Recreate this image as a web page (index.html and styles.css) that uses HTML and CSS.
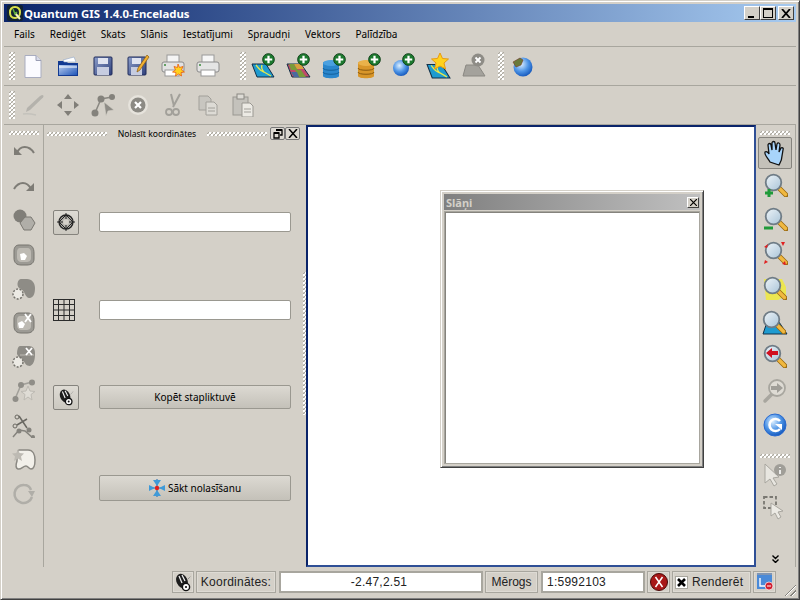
FILE: index.html
```html
<!DOCTYPE html>
<html>
<head lang="lv">
    <meta charset="UTF-8">
    <title>Quantum GIS 1.4.0-Enceladus</title>
    <link rel="stylesheet" href="styles.css">
</head>
<body>
<svg class="sprite" width="0" height="0">
    <defs>
        <linearGradient id="blueFill" x1="0" y1="0" x2="1" y2="1"><stop offset="0" stop-color="#bcd0f0"/><stop offset="1" stop-color="#1f55b8"/></linearGradient>
        <linearGradient id="floppy" x1="0" y1="0" x2="1" y2="1"><stop offset="0" stop-color="#8d9fcb"/><stop offset="1" stop-color="#2e3f7a"/></linearGradient>
        <radialGradient id="globe" cx=".4" cy=".35" r=".7"><stop offset="0" stop-color="#dcefff"/><stop offset=".55" stop-color="#4d94e6"/><stop offset="1" stop-color="#0f52b8"/></radialGradient>
        <linearGradient id="lens" x1="0" y1="0" x2="1" y2="1"><stop offset="0" stop-color="#eef4f8"/><stop offset="1" stop-color="#a9c4d8"/></linearGradient>

        <symbol id="plus" viewBox="0 0 14 14">
            <circle cx="7" cy="7" r="6.3" fill="#1c7a2e" stroke="#0c3d16"/>
            <path d="M7 3v8M3 7h8" stroke="#fff" stroke-width="2.4"/>
        </symbol>
        <symbol id="mapbase" viewBox="0 0 24 24">
            <path d="M1 10h14l8 13H6z" fill="#1e9bd0" stroke="#123048"/>
            <path d="M5 11c3 4 4 6 8 7l7 4M11 11c-1 3 0 5 2 7" fill="none" stroke="#e8e84a" stroke-width="1.3"/>
        </symbol>
        <symbol id="mouse" viewBox="0 0 20 20">
            <ellipse cx="9" cy="9" rx="5.5" ry="7.5" transform="rotate(-25 9 9)" fill="#1c1c1c"/>
            <path d="M6 4l3 7M9 3l3 6" stroke="#eee" stroke-width="1.3"/>
            <circle cx="13" cy="15" r="3.6" fill="#fff" stroke="#111" stroke-width="1.4"/>
            <circle cx="13" cy="15" r="1.1" fill="#111"/>
            <path d="M15 7l3-3" stroke="#777" stroke-dasharray="1 1"/>
        </symbol>
        <symbol id="magnifier" viewBox="0 0 24 24">
            <path d="M15 15l7 7" stroke="#9a6a10" stroke-width="5" stroke-linecap="round"/>
            <path d="M15.500 15.500l6 6" stroke="#f0b840" stroke-width="3.400" stroke-linecap="round"/>
            <circle cx="9.500" cy="9.500" r="7.800" fill="url(#lens)" stroke="#6f7c86" stroke-width="1.800"/>
        </symbol>
        <symbol id="blob" viewBox="0 0 24 24">
            <path d="M7 2h9c4 0 6 3 6 8v6c0 4-3 6-7 6H9c-4 0-7-2-7-7V8c0-4 2-6 5-6z" fill="#9c9a94" stroke="#77756f"/>
            <path d="M8 5h7c3 0 4 2 4 5v5c0 3-2 4-5 4H9c-2 0-4-2-4-4V9c0-2 1-4 3-4z" fill="#bdbab3"/>
        </symbol>
    </defs>
</svg>

<div class="window">
    <div class="titlebar">
        <svg class="app-icon" width="16" height="16" viewBox="0 0 16 16">
            <rect width="16" height="16" fill="#123" rx="2"/>
            <path d="M8 2c3.500 0 5 2.500 5 5.500S11 13 8 13 3 11 3 7.500 4.500 2 8 2z" fill="none" stroke="#d8e04a" stroke-width="2"/>
            <path d="M8 8l5 6" stroke="#f2f2c0" stroke-width="2"/>
            <path d="M6 4l2 5 2-2" fill="none" stroke="#5fae3a" stroke-width="1.500"/>
        </svg>
        <span class="title-text">Quantum GIS 1.4.0-Enceladus</span>
        <div class="caption-btns">
            <div class="caption-btn"><i class="cap-min"></i></div>
            <div class="caption-btn"><i class="cap-max"></i></div>
            <div class="caption-btn cap-close">
                <svg width="10" height="9" viewBox="0 0 10 9"><path d="M1 0l8 9M9 0l-8 9" stroke="#000" stroke-width="1.800"/></svg>
            </div>
        </div>
    </div>

    <ul class="menubar">
        <li>Fails</li>
        <li>Rediģēt</li>
        <li>Skats</li>
        <li>Slānis</li>
        <li>Iestatījumi</li>
        <li>Spraudņi</li>
        <li>Vektors</li>
        <li>Palīdzība</li>
    </ul>

    <div class="toolbar">
        <span class="grip-v"></span>
        <div class="tool"><svg width="24" height="24" viewBox="0 0 24 24"><path d="M4 1.500h11l5 5v17H4z" fill="#fbfbff" stroke="#a9adc0"/><path d="M15 1.500v5h5" fill="#d8dbe8" stroke="#9a9eb4"/></svg></div>
        <div class="tool"><svg width="24" height="24" viewBox="0 0 24 24"><path d="M2 7h8l2 2h10v13H2z" fill="#123a92"/><path d="M7 6l11-3 2 5H8z" fill="#fff" stroke="#8fa4c8" stroke-width=".6"/><path d="M3 11h18v10H3z" fill="url(#blueFill)"/><path d="M3 13h18" stroke="#fff"/></svg></div>
        <div class="tool"><svg width="24" height="24" viewBox="0 0 24 24"><rect x="3" y="3" width="18" height="18" rx="1" fill="url(#floppy)" stroke="#1f2a5a"/><rect x="7" y="4" width="10" height="6" fill="#dfe3f0"/><rect x="6" y="13" width="12" height="8" fill="#c6cce0"/></svg></div>
        <div class="tool"><svg width="24" height="24" viewBox="0 0 24 24"><rect x="2" y="3" width="18" height="18" rx="1" fill="url(#floppy)" stroke="#1f2a5a"/><rect x="6" y="4" width="9" height="6" fill="#dfe3f0"/><rect x="5" y="13" width="11" height="8" fill="#c6cce0"/><path d="M21 1l2 2-9 13-3 2 1-4z" fill="#f0b030" stroke="#8a5a10" stroke-width=".7"/></svg></div>
        <div class="tool"><svg width="24" height="24" viewBox="0 0 24 24"><rect x="6" y="1" width="12" height="8" fill="#f4f4f4" stroke="#999"/><rect x="1" y="8" width="22" height="10" rx="2" fill="#e2e2e2" stroke="#8a8a8a"/><rect x="4" y="16" width="14" height="6" fill="#fff" stroke="#999"/><circle cx="4" cy="11" r="1" fill="#3a8a3a"/><path d="M17 10l1.500 3.500 3.500-1-1.500 3.500 3 2-3.500.5.500 3.500-3-2-3 2 .5-3.500-3.500-.5 3-2-1.500-3.500 3.500 1z" fill="#ffd21e" stroke="#e85a10" stroke-width=".8"/></svg></div>
        <div class="tool"><svg width="24" height="24" viewBox="0 0 24 24"><rect x="6" y="1" width="12" height="8" fill="#f6f6f6" stroke="#999"/><rect x="1" y="8" width="22" height="10" rx="2" fill="#e4e4e4" stroke="#8a8a8a"/><rect x="5" y="16" width="14" height="6" fill="#fff" stroke="#999"/><circle cx="4" cy="11" r="1" fill="#3a8a3a"/></svg></div>
        <span class="grip-v grip-gap"></span>
        <div class="tool"><svg width="26" height="26" viewBox="0 0 26 26"><use href="#mapbase" x="0" y="1" width="24" height="24"/><use href="#plus" x="11" y="0" width="13" height="13"/></svg></div>
        <div class="tool"><svg width="26" height="26" viewBox="0 0 26 26"><path d="M1 11h14l9 13H6z" fill="#c04a6a" stroke="#123048"/><path d="M3 11h5l4 6H5zM9 17h6l5 7h-7z" fill="#7a9a3a"/><path d="M8 11h7l3 5h-7z" fill="#d8a040"/><path d="M5 19h6l2 5H8z" fill="#4a6aa0"/><use href="#plus" x="11" y="0" width="13" height="13"/></svg></div>
        <div class="tool"><svg width="26" height="26" viewBox="0 0 26 26"><path d="M2 10c0-3 16-3 16 0v13c0 3-16 3-16 0z" fill="#2a86cc"/><ellipse cx="10" cy="10" rx="8" ry="3" fill="#4aa0e0"/><path d="M2 15c0 3 16 3 16 0M2 19c0 3 16 3 16 0" fill="none" stroke="#12609c"/><use href="#plus" x="12" y="0" width="13" height="13"/></svg></div>
        <div class="tool"><svg width="26" height="26" viewBox="0 0 26 26"><path d="M2 10c0-3 16-3 16 0v13c0 3-16 3-16 0z" fill="#d8962a"/><ellipse cx="10" cy="10" rx="8" ry="3" fill="#eab24a"/><path d="M2 15c0 3 16 3 16 0M2 19c0 3 16 3 16 0" fill="none" stroke="#8a5a10"/><use href="#plus" x="12" y="0" width="13" height="13"/></svg></div>
        <div class="tool"><svg width="26" height="26" viewBox="0 0 26 26"><circle cx="10" cy="15" r="8" fill="url(#globe)"/><use href="#plus" x="11" y="0" width="13" height="13"/></svg></div>
        <div class="tool"><svg width="26" height="26" viewBox="0 0 26 26"><use href="#mapbase" x="0" y="1" width="25" height="25"/><path d="M14 0l2.500 5.500 6 .5-4.500 4 1.500 6-5.500-3-5.500 3 1.500-6L5.500 6l6-.5z" fill="#ffd21e" stroke="#e89a10"/></svg></div>
        <div class="tool"><svg width="26" height="26" viewBox="0 0 26 26"><path d="M5 12h12l7 11H2z" fill="#a4a29c" stroke="#8a8882"/><circle cx="17" cy="7" r="6.500" fill="#8e8c86"/><path d="M14.500 4.500l5 5M19.500 4.500l-5 5" stroke="#fff" stroke-width="1.800"/></svg></div>
        <span class="grip-v grip-gap-2"></span>
        <div class="tool"><svg width="24" height="24" viewBox="0 0 24 24"><circle cx="13" cy="13" r="9.500" fill="url(#globe)"/><path d="M3 8l7-4 3 2-2 5-5 2z" fill="#6a7a3a" stroke="#7a3a20" stroke-width=".6"/></svg></div>
    </div>

    <div class="toolbar">
        <span class="grip-v"></span>
        <div class="tool"><svg width="24" height="24" viewBox="0 0 24 24"><path d="M21 2c1.500 0 2 1 1 2.500L9 17l-4 2 1-4L19 3z" fill="#b4b2ac"/><path d="M2 21c5-1 9 0 13 1" fill="none" stroke="#c4c2bc" stroke-width="1.500"/></svg></div>
        <div class="tool"><svg width="24" height="24" viewBox="0 0 24 24"><path d="M12 1l4 5H8zM12 23l-4-5h8zM1 12l5-4v8zM23 12l-5 4V8z" fill="#807e78"/></svg></div>
        <div class="tool"><svg width="24" height="24" viewBox="0 0 24 24"><path d="M4 20L10 6l11-2" fill="none" stroke="#8a8882" stroke-width="1.500"/><circle cx="4" cy="20" r="3.500" fill="#84827c"/><circle cx="10" cy="6" r="3.500" fill="#84827c"/><circle cx="21" cy="4" r="3" fill="#84827c"/><path d="M13 9l10 8-6 1-2 5z" fill="#8e8c86" stroke="#d4d0c8" stroke-width=".6"/></svg></div>
        <div class="tool"><svg width="24" height="24" viewBox="0 0 24 24"><circle cx="12" cy="12" r="10" fill="#e6e3dc"/><circle cx="12" cy="12" r="7.500" fill="#8c8a84"/><path d="M9 9l6 6M15 9l-6 6" stroke="#fff" stroke-width="2.200"/></svg></div>
        <div class="tool"><svg width="24" height="24" viewBox="0 0 24 24"><path d="M10 1l3 12M19 1l-7 13" stroke="#a2a09a" stroke-width="2"/><circle cx="8" cy="19" r="3" fill="none" stroke="#a2a09a" stroke-width="1.800"/><circle cx="15" cy="19" r="3" fill="none" stroke="#a2a09a" stroke-width="1.800"/></svg></div>
        <div class="tool"><svg width="24" height="24" viewBox="0 0 24 24"><path d="M3 3h9l3 3v11H3z" fill="#c8c6c0" stroke="#a2a09a"/><path d="M10 9h8l3 3v10H10z" fill="#dddbd5" stroke="#a2a09a"/><path d="M12 15h7M12 18h7" stroke="#a2a09a"/></svg></div>
        <div class="tool"><svg width="24" height="24" viewBox="0 0 24 24"><rect x="2" y="4" width="15" height="18" fill="#c4c2bc" stroke="#9a9892"/><rect x="6" y="1" width="7" height="5" fill="#dddbd5" stroke="#8a8882"/><path d="M11 10h8l3 3v11H11z" fill="#eceae4" stroke="#9a9892"/><path d="M13 16h7M13 19h7" stroke="#a2a09a"/></svg></div>
    </div>

    <div class="main">
        <div class="side-tools">
            <span class="grip-h"></span>
            <div class="side-tool"><svg width="24" height="24" viewBox="0 0 24 24"><path d="M5 13C8 5 17 5 22 13" fill="none" stroke="#7e7c76" stroke-width="2"/><path d="M2 7v8h8z" fill="#7e7c76"/></svg></div>
            <div class="side-tool"><svg width="24" height="24" viewBox="0 0 24 24"><path d="M2 15C7 7 15 7 19 15" fill="none" stroke="#7e7c76" stroke-width="2"/><path d="M22 9v8h-8z" fill="#7e7c76"/></svg></div>
            <div class="side-tool"><svg width="24" height="24" viewBox="0 0 24 24"><circle cx="8" cy="8" r="6.500" fill="#807e78"/><path d="M13 9h6l4 6-4 7h-7l-4-7z" fill="#b0aea8" stroke="#7a7872"/></svg></div>
            <div class="side-tool"><svg width="24" height="24" viewBox="0 0 24 24"><use href="#blob"/><path d="M8 11l4-1 3 3-2 4-4 0z" fill="#fff"/></svg></div>
            <div class="side-tool"><svg width="24" height="24" viewBox="0 0 24 24"><path d="M9 2h6c5 0 8 4 8 9s-1 9-5 10c-3 0-4-2-6-6-1-2-3-3-5-4-3-3-1-9 2-9z" fill="#8e8c86"/><circle cx="6" cy="17" r="5" fill="#eceae4" stroke="#76746e" stroke-dasharray="2 1.500" stroke-width="1.500"/></svg></div>
            <div class="side-tool"><svg width="24" height="24" viewBox="0 0 24 24"><use href="#blob"/><path d="M6 12l4-2 3 3-2 4H7z" fill="#fff"/><path d="M13 3l6 8M19 3l-6 8" stroke="#fff" stroke-width="1.800"/></svg></div>
            <div class="side-tool"><svg width="24" height="24" viewBox="0 0 24 24"><path d="M8 1h9c4 0 6 3 6 7s0 11-5 13c-4 0-5-3-7-6-2-2-5-3-6-6 0-4 1-8 3-8z" fill="#8e8c86"/><path d="M8 10h14" stroke="#bdbab3"/><path d="M14 3l6 7M20 3l-6 7" stroke="#fff" stroke-width="1.800"/><circle cx="6" cy="17" r="5" fill="#eceae4" stroke="#76746e" stroke-dasharray="2 1.500" stroke-width="1.500"/></svg></div>
            <div class="side-tool"><svg width="24" height="24" viewBox="0 0 24 24"><path d="M3 20L9 6l11-3" fill="none" stroke="#a2a09a" stroke-width="1.500"/><circle cx="3.500" cy="20" r="3" fill="#908e88"/><circle cx="9" cy="6" r="3" fill="#908e88"/><circle cx="20" cy="3.500" r="3" fill="#908e88"/><path d="M16 7l2 5 5 .5-4 3 1 5.500-4-3-4 3 1-5.500-4-3 5-.5z" fill="#dfdcd5" stroke="#bdbab3"/></svg></div>
            <div class="side-tool"><svg width="24" height="24" viewBox="0 0 24 24"><path d="M7 2l8 12M15 5L5 11" stroke="#6a6862" stroke-width="1.500"/><circle cx="5" cy="3" r="2" fill="none" stroke="#6a6862"/><circle cx="3" cy="12" r="2" fill="none" stroke="#6a6862"/><path d="M1 23l6-7 6 1 8 7" fill="none" stroke="#85837d" stroke-width="1.500"/><circle cx="7" cy="17" r="2.500" fill="#85837d"/><circle cx="17" cy="16" r="2.500" fill="#85837d"/><circle cx="21" cy="23" r="2" fill="#85837d"/></svg></div>
            <div class="side-tool"><svg width="24" height="24" viewBox="0 0 24 24"><path d="M7 2h9c5 0 7 5 7 10 0 5-1 9-4 9-2 0-3-3-5-3-3 0-5 4-8 3-3-1-2-5-1-8 0-4 0-11 2-11z" fill="#f2f0ea" stroke="#8a8882" stroke-width="1.500"/><path d="M6 1l1.500 4 4.500.5-3 3 1 4.500-4-2.500-4 2.500 1-4.500-3-3 4.500-.5z" fill="#bdbab3"/></svg></div>
            <div class="side-tool"><svg width="24" height="24" viewBox="0 0 24 24"><path d="M20 15A9 9 0 1 1 12 3c4 0 6 2 7 5" fill="none" stroke="#b0aea8" stroke-width="2.500"/><path d="M16 9h7l-3 6z" fill="#b0aea8"/></svg></div>
        </div>

        <div class="dock">
            <div class="dock-title">
                <span class="grip-h dock-grip"></span>
                <span class="dock-name">Nolasīt koordinātes</span>
                <span class="grip-h dock-grip"></span>
                <div class="dock-btn dock-btn-first"><svg width="10" height="10" viewBox="0 0 10 10"><path d="M3 1h6v5H7M1 4h5v5H1z" fill="none" stroke="#000" stroke-width="1.300"/><path d="M3 1h6M1 4h5" stroke="#000" stroke-width="2"/></svg></div>
                <div class="dock-btn"><svg width="10" height="9" viewBox="0 0 10 9"><path d="M1 0l8 9M9 0l-8 9" stroke="#000" stroke-width="1.500"/></svg></div>
            </div>
            <div class="dock-body">
                <div class="icon-btn"><svg width="18" height="18" viewBox="0 0 18 18"><circle cx="9" cy="9" r="7" fill="#b0aea8" stroke="#222" stroke-width="1.300"/><path d="M9 0v18M0 9h18" stroke="#222"/><path d="M9 2l7 7-7 7-7-7z" fill="none" stroke="#222"/><circle cx="9" cy="9" r="3" fill="#d4d0c8"/></svg></div>
                <input class="field" type="text">

                <svg class="grid-icon" width="22" height="22" viewBox="0 0 22 22"><path d="M.5 0v22M5.500 0v22M11 0v22M16.500 0v22M21.500 0v22M0 .5h22M0 5.500h22M0 11h22M0 16.500h22M0 21.500h22" fill="none" stroke="#2c2c2c"/></svg>
                <input class="field" type="text">

                <div class="icon-btn"><svg width="18" height="18" viewBox="0 0 20 20"><use href="#mouse"/></svg></div>
                <button class="push">Kopēt stapliktuvē</button>

                <span></span>
                <button class="push push-tall">
                    <svg width="16" height="18" viewBox="0 0 16 18"><path d="M8 0v18M0 9h16" stroke="#3a7ab8" stroke-width="1.200"/><path d="M4 1h8L8 7zM4 17h8L8 11zM0 6v6l6-3zM16 6v6l-6-3z" fill="#3f9ad8"/><circle cx="8" cy="9" r="2.200" fill="#e02020"/></svg>
                    Sākt nolasīšanu
                </button>
            </div>
            <span class="splitter"></span>
        </div>

        <div class="canvas"></div>

        <div class="right-tools">
            <span class="grip-h"></span>
            <div class="hand-btn"><svg width="24" height="26" viewBox="0 0 24 26"><path d="M7 22C5 18 1 15 2 12c1-1 3 0 4 2L5 5c0-2 3-2 3 0l1 5V3c0-2 3-2 3 0l1 7 1-6c1-2 3-1 3 1l-1 7 2-4c1-1 3 0 2 2l-1 6c0 4-2 7-3 9z" fill="#a8d4fa" stroke="#111" stroke-width="1.300"/></svg></div>
            <div class="side-tool"><svg width="26" height="26" viewBox="0 0 26 26"><use href="#magnifier" x="2" y="0" width="24" height="24"/><path d="M7 16v8M3 20h8" stroke="#1f9a3a" stroke-width="3"/></svg></div>
            <div class="side-tool"><svg width="26" height="26" viewBox="0 0 26 26"><use href="#magnifier" x="2" y="0" width="24" height="24"/><path d="M2 21h9" stroke="#1f9a3a" stroke-width="3"/></svg></div>
            <div class="side-tool"><svg width="26" height="26" viewBox="0 0 26 26"><use href="#magnifier" x="2" y="0" width="24" height="24"/><path d="M6 3L2 6l3 1zM19 1l4 0-2 4zM2 23l1-4 3 2zM24 24l-4-1 3-3z" fill="#e02020"/></svg></div>
            <div class="side-tool"><svg width="26" height="26" viewBox="0 0 26 26"><path d="M2 3h18l4 8v9l-8 4H4z" fill="#f6f01e" opacity=".7"/><use href="#magnifier" x="1" y="0" width="24" height="24"/></svg></div>
            <div class="side-tool"><svg width="26" height="26" viewBox="0 0 26 26"><path d="M5 12h12l8 12H1z" fill="#1e9bd0" stroke="#123048"/><use href="#magnifier" x="0" y="0" width="24" height="24"/></svg></div>
            <div class="side-tool"><svg width="26" height="26" viewBox="0 0 26 26"><use href="#magnifier" x="1" y="0" width="24" height="24"/><path d="M4 9l6-5v3h6v4h-6v3z" fill="#d01020"/></svg></div>
            <div class="side-tool"><svg width="26" height="26" viewBox="0 0 26 26"><path d="M10 16l-7 7" stroke="#a8a69f" stroke-width="3.500" stroke-linecap="round"/><circle cx="15" cy="10" r="8" fill="#dedbd4" stroke="#a8a69f" stroke-width="1.800"/><path d="M21 10l-6-5v3h-6v4h6v3z" fill="#a09e98"/></svg></div>
            <div class="side-tool"><svg width="26" height="26" viewBox="0 0 26 26"><circle cx="13" cy="13" r="11" fill="url(#globe)" stroke="#2a6ad0"/><path d="M18 9a6 6 0 1 0 0 8" fill="none" stroke="#fff" stroke-width="2.600"/><path d="M13 12h7v6z" fill="#fff"/></svg></div>
            <span class="grip-h grip-mid"></span>
            <div class="side-tool side-tool-sm"><svg width="26" height="26" viewBox="0 0 26 26"><path d="M3 3v19l5-4 4 7 3-2-4-6 6-1z" fill="#e8e6e0" stroke="#a8a69f"/><circle cx="18" cy="9" r="6" fill="#a09e98"/><path d="M18 6v1M18 9v4" stroke="#fff" stroke-width="1.600"/></svg></div>
            <div class="side-tool"><svg width="26" height="26" viewBox="0 0 26 26"><path d="M2 3h12v11H2z" fill="none" stroke="#7a7872" stroke-width="1.800" stroke-dasharray="3.500 2"/><path d="M9 9v13l4-3 3 6 3-2-3-5 5-1z" fill="#eceae4" stroke="#a8a69f"/></svg></div>
            <span class="more">
                <svg width="7" height="8" viewBox="0 0 7 8"><path d="M.5 .5L3.500 3.500 6.500 .5M.5 4.500L3.500 7.500 6.500 4.500" fill="none" stroke="#000" stroke-width="1.400"/></svg>
            </span>
        </div>

        <div class="layers">
            <div class="layers-title">
                <span>Slāņi</span>
                <div class="layers-close"><svg width="7" height="7" viewBox="0 0 7 7"><path d="M0 0l7 7M7 0l-7 7" stroke="#000" stroke-width="1.200"/></svg></div>
            </div>
            <div class="layers-body"></div>
        </div>
    </div>

    <div class="statusbar">
        <div class="st-cell st-mouse"><svg width="20" height="20" viewBox="0 0 20 20"><use href="#mouse"/></svg></div>
        <div class="st-cell st-coord-label">Koordinātes:</div>
        <div class="st-cell st-coord">-2.47,2.51</div>
        <div class="st-cell st-scale-label">Mērogs</div>
        <div class="st-cell st-scale">1:5992103</div>
        <div class="st-cell st-stop"><svg width="18" height="18" viewBox="0 0 18 18"><circle cx="9" cy="9" r="8.500" fill="#a81818" stroke="#4a0808"/><path d="M5.500 4l7 10M12.500 4l-7 10" stroke="#fff" stroke-width="1.500"/></svg></div>
        <div class="st-cell st-render"><span class="check"><svg width="9" height="9" viewBox="0 0 9 9"><path d="M1 1l7 7M8 1l-7 7" stroke="#000" stroke-width="2.600"/></svg></span>Renderēt</div>
        <div class="st-cell st-crs"><svg width="18" height="18" viewBox="0 0 18 18"><path d="M1 2h15v14H1z" fill="#4a8ad8"/><path d="M4 5v8h6" fill="none" stroke="#fff" stroke-width="1.400"/><path d="M1 1h15" stroke="#2a5aa0"/><circle cx="13" cy="13" r="4" fill="#d02030" stroke="#fff" stroke-width=".7"/><path d="M11 13h4" stroke="#fff"/></svg></div>
        <span class="resize-grip"></span>
    </div>
</div>
</body>
</html>
```

FILE: styles.css
```css
*{
    margin:0;
    padding:0;
    box-sizing: border-box;
}
ul,ul>li{
    list-style: none;
}
html,body{
    width:800px;
    height:600px;
    overflow:hidden;
}
body{
    font-family: "Noto Sans", "DejaVu Sans", sans-serif;
    font-size:11px;
    color:#000;
    background:#d4d0c8;
}
.sprite{
    display:block;
    height:0;
}

/* window frame */
.window{
    width:800px;
    height:600px;
    padding:3px 3px 3px 3px;
    background:#d4d0c8;
    border:1px solid #d4d0c8;
    border-right-color:#404040;
    border-bottom-color:#404040;
    box-shadow: inset 1px 1px 0 #fff, inset -1px -1px 0 #808080;
    display:flex;
    flex-direction:column;
}
.titlebar{
    flex:none;
    height:18px;
    display:flex;
    align-items:center;
    padding:0 2px 0 3px;
    background:linear-gradient(to right,#0a246a,#a6caf0);
    color:#fff;
}
.app-icon{
    flex:none;
}
.title-text{
    margin-left:1px;
    font-weight:bold;
    font-size:11.4px;
    white-space:nowrap;
}
.caption-btns{
    margin-left:auto;
    display:flex;
}
.caption-btn{
    width:16px;
    height:14px;
    background:#d4d0c8;
    border:1px solid;
    border-color:#fff #404040 #404040 #fff;
    display:flex;
    align-items:center;
    justify-content:center;
}
.cap-close{
    margin-left:2px;
}
.cap-min{
    display:block;
    width:6px;
    height:2px;
    background:#000;
    margin-top:7px;
    margin-right:2px;
}
.cap-max{
    display:block;
    width:10px;
    height:10px;
    border:1px solid #000;
    border-top-width:2px;
}

/* menu and toolbars */
.menubar{
    flex:none;
    height:25px;
    display:flex;
    align-items:center;
    gap:15px;
    padding:0 0 1px 10px;
    border-bottom:1px solid #a8a69e;
    font-size:10px;
}
.toolbar{
    flex:none;
    height:39px;
    display:flex;
    align-items:center;
    padding-left:5px;
    border-bottom:1px solid #a8a69e;
}
.tool{
    flex:none;
    width:35px;
    height:30px;
    display:flex;
    align-items:center;
    justify-content:center;
}
.grip-v,.grip-h,.splitter{
    background:
        conic-gradient(#fff 25%,#0000 0) 0 0/4px 4px,
        conic-gradient(#fff 25%,#0000 0) 2px 2px/4px 4px,
        conic-gradient(#aaa89f 25%,#0000 0) 1px 1px/4px 4px,
        conic-gradient(#aaa89f 25%,#0000 0) 3px 3px/4px 4px;
}
.grip-v{
    flex:none;
    width:6px;
    height:28px;
}
.grip-gap{
    margin-left:15px;
}
.grip-gap-2{
    margin-left:7px;
}
.grip-h{
    display:block;
    flex:none;
    width:30px;
    height:4px;
}

/* main area */
.main{
    flex:none;
    height:443px;
    display:flex;
    position:relative;
}
.side-tools{
    flex:none;
    width:40px;
    height:442px;
    padding:6px 0 0 5px;
    border-right:1px solid #a8a69e;
    display:flex;
    flex-direction:column;
    align-items:flex-start;
}
.side-tool{
    flex:none;
    width:30px;
    height:34.2px;
    display:flex;
    align-items:center;
    justify-content:center;
}
.dock{
    flex:none;
    width:262px;
    position:relative;
    display:flex;
    flex-direction:column;
}
.dock-title{
    flex:none;
    height:17px;
    display:flex;
    align-items:center;
    padding-left:3px;
}
.dock-grip{
    width:60px;
}
.dock-name{
    flex:none;
    width:100px;
    text-align:center;
    font-size:8.6px;
    white-space:nowrap;
}
.dock-btn{
    flex:none;
    width:15px;
    height:13px;
    border:1px solid #777;
    border-radius:2px;
    display:flex;
    align-items:center;
    justify-content:center;
    background:#dcd9d2;
}
.dock-btn-first{
    margin-left:3px;
}
.dock-body{
    flex:none;
    display:grid;
    grid-template-columns:26px 192px;
    grid-template-rows:88px 87px 88px 94px;
    column-gap:20px;
    align-items:center;
    padding:36px 0 0 9px;
}
.icon-btn{
    width:26px;
    height:25px;
    border:1px solid #85837d;
    border-radius:2px;
    background:linear-gradient(#dedbd4,#cbc8c0);
    display:flex;
    align-items:center;
    justify-content:center;
}
.grid-icon{
    display:block;
}
.field{
    display:block;
    width:192px;
    height:20px;
    background:#fff;
    border:1px solid #9a9890;
    border-radius:2px;
    outline:none;
}
.push{
    display:flex;
    align-items:center;
    justify-content:center;
    gap:3px;
    width:192px;
    height:24px;
    font-family:inherit;
    font-size:10px;
    color:#000;
    background:linear-gradient(#dcd9d2,#c4c1b9);
    border:1px solid #9a9890;
    border-radius:2px;
}
.push-tall{
    height:26px;
}
.splitter{
    position:absolute;
    left:259px;
    top:147px;
    width:3px;
    height:143px;
}
.canvas{
    flex:none;
    width:450px;
    height:442px;
    background:#fff;
    border:2px solid;
    border-color:#0a246a #2f4f96 #2f4f96 #0a246a;
}
.right-tools{
    flex:1;
    height:442px;
    display:flex;
    flex-direction:column;
    align-items:center;
    padding:6px 1px 0 0;
    border-right:1px solid #a8a69e;
}
.hand-btn{
    flex:none;
    width:34px;
    height:32px;
    margin-top:2px;
    border:1px solid #85837d;
    border-radius:2px;
    background:#c4c1b9;
    display:flex;
    align-items:center;
    justify-content:center;
}
.grip-mid{
    margin-top:11px;
}
.side-tool-sm{
    height:32px;
}
.more{
    margin-top:auto;
    margin-bottom:4px;
    line-height:0;
}

/* floating layers window */
.layers{
    position:absolute;
    left:436px;
    top:65px;
    width:264px;
    height:278px;
    padding:3px;
    background:#d4d0c8;
    border:1px solid #d4d0c8;
    border-right-color:#404040;
    border-bottom-color:#404040;
    box-shadow: inset 1px 1px 0 #fff, inset -1px -1px 0 #808080;
    display:flex;
    flex-direction:column;
}
.layers-title{
    flex:none;
    height:16px;
    padding:0 1px 0 2px;
    display:flex;
    align-items:center;
    justify-content:space-between;
    background:linear-gradient(to right,#808080,#c0c0c0);
    color:#d4d0c8;
    font-weight:bold;
    font-size:11px;
}
.layers-close{
    width:12px;
    height:11px;
    background:#d4d0c8;
    border:1px solid;
    border-color:#fff #404040 #404040 #fff;
    display:flex;
    align-items:center;
    justify-content:center;
}
.layers-body{
    flex:1;
    margin-top:1px;
    background:#fff;
    border:1px solid #a8a69e;
    box-shadow:inset 1px 1px 0 #85837d;
}

/* status bar */
.statusbar{
    flex:1;
    display:flex;
    align-items:flex-start;
    padding:3px 0 0 168px;
    font-family:"Liberation Sans", Arial, sans-serif;
    font-size:12px;
    letter-spacing:.25px;
    color:#222;
    position:relative;
}
.st-cell{
    flex:none;
    height:22px;
    display:flex;
    align-items:center;
    justify-content:center;
    border:1px solid #a8a69e;
    box-shadow:inset 0 0 0 1px #dedbd4;
    white-space:nowrap;
}
.st-mouse{
    width:22px;
}
.st-coord-label{
    width:80px;
    margin-left:2px;
}
.st-coord{
    width:204px;
    margin-left:3px;
    padding-right:4px;
    background:#fff;
    box-shadow:none;
    border:2px solid #a8a69e;
}
.st-scale-label{
    width:53px;
    margin-left:2px;
    letter-spacing:0;
}
.st-scale{
    width:104px;
    margin-left:3px;
    justify-content:flex-start;
    padding-left:4px;
    background:#fff;
    box-shadow:none;
    border:2px solid #a8a69e;
}
.st-stop{
    width:23px;
    margin-left:2px;
}
.st-render{
    width:79px;
    margin-left:2px;
    justify-content:flex-start;
    padding-left:2px;
    gap:4px;
}
.check{
    width:13px;
    height:13px;
    background:#fff;
    border:1px solid #a8a69e;
    display:flex;
    align-items:center;
    justify-content:center;
}
.st-crs{
    width:23px;
    margin-left:2px;
}
.resize-grip{
    position:absolute;
    right:0;
    bottom:0;
    width:13px;
    height:13px;
    background:repeating-linear-gradient(135deg,#0000 0 2px,#85837d 2px 3px,#fff 3px 4px);
    clip-path:polygon(100% 0,100% 100%,0 100%);
}
```
